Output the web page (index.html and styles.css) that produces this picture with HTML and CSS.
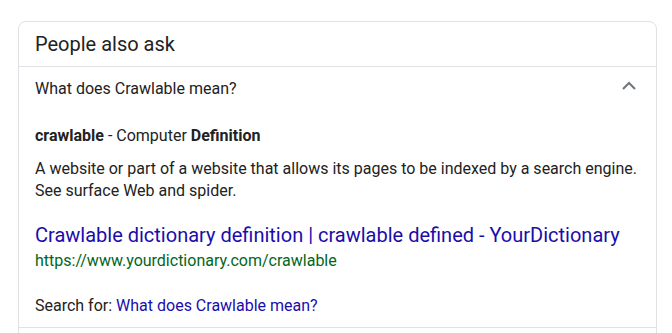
FILE: index.html
```html
<!DOCTYPE html>
<html lang="en">
<head>
<meta charset="utf-8">
<title>People also ask</title>
<link rel="stylesheet" href="styles.css">
</head>
<body>
<div class="card">
  <div class="card-head">People also ask</div>
  <div class="qa">
    <div class="question">
      <span>What does Crawlable mean?</span>
      <svg class="chev" width="14" height="10" viewBox="0 0 14 10"><path d="M1 8 L7 2 L13 8" fill="none" stroke="#70757a" stroke-width="2"/></svg>
    </div>
    <div class="answer">
      <div class="def-head"><b>crawlable</b> - Computer <b>Definition</b></div>
      <div class="def-text">A website or part of a website that allows its pages to be indexed by a search engine. See surface Web and spider.</div>
      <a class="result-title" href="#">Crawlable dictionary definition | crawlable defined - YourDictionary</a>
      <div class="result-url">https://www.yourdictionary.com/crawlable</div>
      <div class="search-for">Search for: <a href="#">What does Crawlable mean?</a></div>
    </div>
  </div>
</div>
</body>
</html>
```

FILE: styles.css
```css
* { box-sizing: border-box; }
html, body { margin: 0; padding: 0; background: #fff; }
body {
  font-family: Roboto, "Liberation Sans", Arial, sans-serif;
  color: #222;
  height: 333px;
  overflow: hidden;
}
.card {
  margin: 21px 0 0 18px;
  width: 639px;
  border: 1px solid #dfe1e5;
  border-radius: 8px;
  height: 330px;
}
.card-head {
  font-size: 20px;
  line-height: 24px;
  padding: 10px 15px 10px 16px;
  border-bottom: 1px solid #dfe1e5;
  color: #222;
}
.question {
  display: flex;
  align-items: flex-start;
  justify-content: space-between;
  font-size: 16px;
  line-height: 21px;
  padding: 11px 20px 0 16px;
  height: 40px;
}
.chev { display: block; margin-top: 2.5px; }
.answer {
  padding: 0 16px;
  font-size: 16px;
  line-height: 22px;
}
.def-head { margin-top: 18px; }
.def-head b { font-weight: 700; }
.def-text { margin-top: 10.5px; }
.result-title {
  display: block;
  margin-top: 22.5px;
  font-size: 20px;
  line-height: 22px;
  color: #1a0dab;
  text-decoration: none;
}
.result-url {
  color: #006621;
  font-size: 16px;
  line-height: 22px;
  margin-top: 3.5px;
}
.search-for {
  margin-top: 23.5px;
  color: #222;
}
.search-for a { color: #1a0dab; text-decoration: none; }
.answer::after {
  content: "";
  display: block;
  border-bottom: 1px solid #dfe1e5;
  margin: 9.5px -16px 0;
}
```
